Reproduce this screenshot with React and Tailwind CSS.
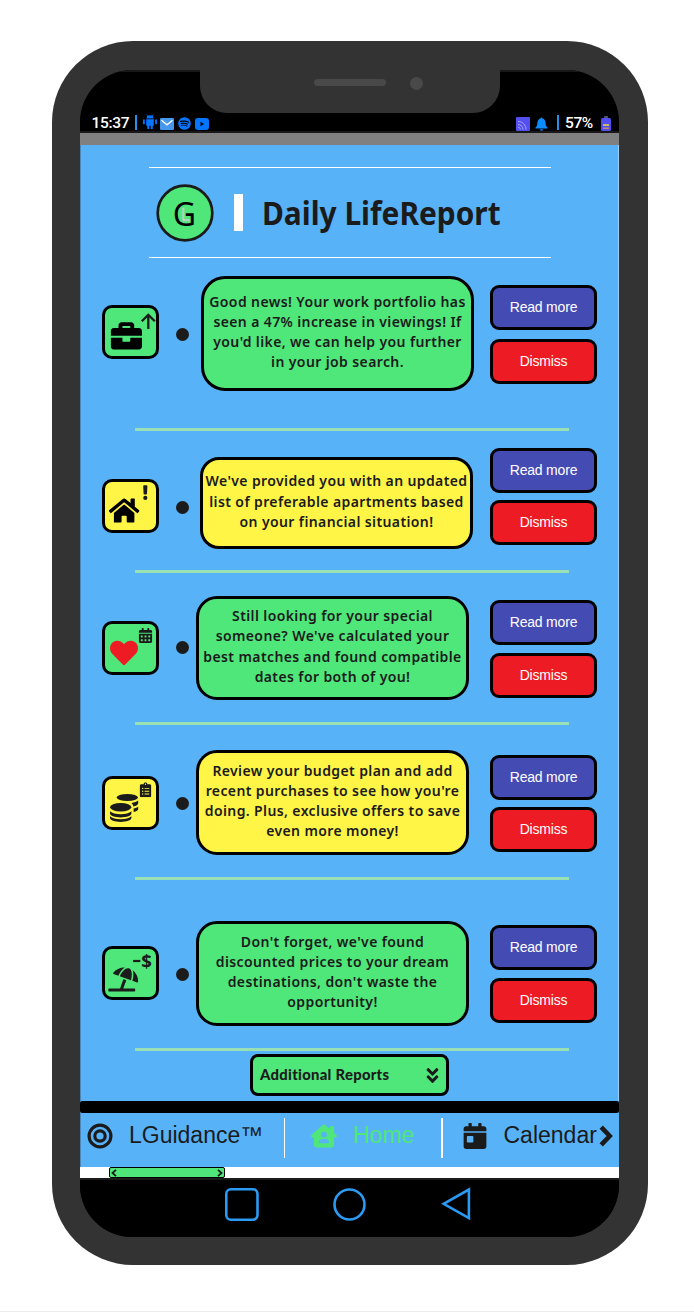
import {
  FaAngleDoubleDown,
  FaBriefcase,
  FaCalendarAlt,
  FaCalendarDay,
  FaClipboardList,
  FaHeart,
  FaHome,
  FaSpotify,
  FaUmbrellaBeach,
} from "react-icons/fa";
import { FaHouseChimneyUser } from "react-icons/fa6";

const INK = "#1b1b1b";

function WorkIcon() {
  return (
    <>
      <FaBriefcase x="8.7" y="15.2" size="31.3" color="#000" />
      <path d="M46.3 24V10.2M39.8 16.2l6.5-6.4 6.5 6.4" fill="none" stroke={INK} strokeWidth="2.3" />
    </>
  );
}

function HousingIcon() {
  return (
    <>
      <FaHome x="6.8" y="16.2" size="30.7" color="#000" />
      <path d="M41.200 7.300a1 1 0 0 1 1-1h2.200a1 1 0 0 1 1 1l-.4 7.400a.8.8 0 0 1-.8.8h-1.800a.8.8 0 0 1-.8-.8z" fill={INK} />
      <circle cx="43.300" cy="18.900" r="2.100" fill={INK} />
    </>
  );
}

function DatingIcon() {
  return (
    <>
      <FaHeart x="8" y="17.9" size="28" color="#ed1c24" />
      <FaCalendarAlt x="36" y="7" size="15" color={INK} />
    </>
  );
}

function BudgetIcon() {
  return (
    <>
      <g fill={INK}>
        <ellipse cx="25.300" cy="21.500" rx="10.700" ry="3.500" />
        <path d="M29.500 27c3-.4 5.300-1.200 6.700-2.400v2.600c0 1.500-2 2.600-4.800 3.200-.3-1.400-.9-2.500-1.900-3.400z" />
        <path d="M31.600 32.400c2-.4 3.600-1.100 4.600-2v2.600c0 1.300-1.800 2.500-4.600 3.100z" />
        <ellipse cx="18.700" cy="31.300" rx="10.600" ry="4.200" />
        <path d="M8 35.200c2 2 6 3 10.700 3s8.700-1 10.700-3v2.400c0 2.200-4.800 3.900-10.700 3.900S8 39.800 8 37.600z" />
        <path d="M8 40.300c2 2 6 3 10.700 3s8.700-1 10.700-3v1.800c0 2.200-4.800 3.900-10.700 3.900S8 44.300 8 42.100z" />
      </g>
      <FaClipboardList x="36" y="6.300" size="15" color={INK} />
    </>
  );
}

function TravelIcon() {
  return (
    <>
      <FaUmbrellaBeach x="6.200" y="18.500" size="30" color={INK} />
      <path d="M31 15h7.300" stroke={INK} strokeWidth="2.200" />
      <text x="39.200" y="21.800" fontSize="18.500" fontWeight="700" fontFamily="'Noto Sans', sans-serif" fill={INK}>
        $
      </text>
    </>
  );
}

const reports = [
  {
    id: "work",
    Icon: WorkIcon,
    lines: ["Good news! Your work portfolio has", "seen a 47% increase in viewings! If", "you'd like, we can help you further", "in your job search."],
    row: "h-[170px]",
    tile: "mt-[47px] bg-[#4fe77a]",
    dot: "mt-[70px]",
    card: "ml-[12px] mt-[18px] h-[115px] rounded-[24px] bg-[#4fe77a] pt-[13px] leading-[20px]",
    actions: "ml-[16px] mt-[27px] gap-[9px]",
  },
  {
    id: "housing",
    Icon: HousingIcon,
    lines: ["We've provided you with an updated", "list of preferable apartments based", "on your financial situation!"],
    row: "h-[139px]",
    tile: "mt-[48px] bg-[#fff547]",
    dot: "mt-[70px]",
    card: "ml-[11px] mt-[26px] h-[92px] rounded-[19px] bg-[#fff547] pt-[11.200px] leading-[20.5px]",
    actions: "ml-[17px] mt-[17px] gap-[7px]",
  },
  {
    id: "dating",
    Icon: DatingIcon,
    lines: ["Still looking for your special", "someone? We've calculated your", "best matches and found compatible", "dates for both of you!"],
    row: "h-[149px]",
    tile: "mt-[48px] bg-[#4fe77a]",
    dot: "mt-[68px]",
    card: "ml-[7px] mt-[23px] h-[104px] rounded-[21px] bg-[#4fe77a] pt-[7.200px] leading-[20.3px]",
    actions: "ml-[21px] mt-[27px] gap-[8px]",
  },
  {
    id: "budget",
    Icon: BudgetIcon,
    lines: ["Review your budget plan and add", "recent purchases to see how you're", "doing. Plus, exclusive offers to save", "even more money!"],
    row: "h-[152px]",
    tile: "mt-[51px] bg-[#fff547]",
    dot: "mt-[72px]",
    card: "ml-[7px] mt-[25px] h-[105px] rounded-[21px] bg-[#fff547] pt-[8px] leading-[20px]",
    actions: "ml-[21px] mt-[30px] gap-[7px]",
  },
  {
    id: "travel",
    Icon: TravelIcon,
    lines: ["Don't forget, we've found", "discounted prices to your dream", "destinations, don't waste the", "opportunity!"],
    row: "h-[168px]",
    tile: "mt-[66px] bg-[#4fe77a]",
    dot: "mt-[88px]",
    card: "ml-[7px] mt-[41px] h-[105px] rounded-[21px] bg-[#4fe77a] pt-[8px] leading-[20px]",
    actions: "ml-[21px] mt-[45px] gap-[8px]",
  },
];

function ActionButton({ color, children }) {
  return (
    <button
      className={`h-[45px] w-[107px] rounded-[9px] border-[3px] border-black text-center font-['Liberation_Sans',sans-serif] text-[14px] tracking-[-0.2px] text-white ${color}`}
    >
      {children}
    </button>
  );
}

function Report({ report }) {
  const { Icon } = report;
  return (
    <>
      <section className={`flex items-start pl-[21px] ${report.row}`}>
        <div className={`h-[54px] w-[57px] shrink-0 rounded-[10px] border-[3px] border-black ${report.tile}`}>
          <svg viewBox="0 0 57 54" className="-m-[3px] h-[54px] w-[57px]">
            <Icon />
          </svg>
        </div>
        <span className={`ml-[17px] size-[13px] shrink-0 rounded-full bg-[#1b1b1b] ${report.dot}`} />
        <p
          className={`w-[273px] shrink-0 border-[3px] border-black text-center font-['Noto_Sans',sans-serif] text-[14px] font-semibold tracking-[0.39px] whitespace-nowrap text-[#1b1b1b] ${report.card}`}
        >
          {report.lines.map((line) => (
            <span key={line} className="-mx-2 block">
              {line}
            </span>
          ))}
        </p>
        <div className={`flex flex-col ${report.actions}`}>
          <ActionButton color="bg-[#444bb3]">Read more</ActionButton>
          <ActionButton color="bg-[#ed1c24]">Dismiss</ActionButton>
        </div>
      </section>
      <hr className="ml-[54px] h-[3px] w-[434px] border-0 bg-[#99e0b5]" />
    </>
  );
}

function StatusBar() {
  return (
    <div className="flex h-[20px] items-center border-b-2 border-[#181818] pl-[11px] font-['Roboto',sans-serif] text-[15.5px] leading-none font-medium text-white">
      <span className="w-[44px] pt-[4px] pl-[0.500px] tracking-[-0.3px]">15:37</span>
      <span className="h-[15px] w-[2px] bg-[#2390ea]" />
      <svg viewBox="0 0 14 16" className="ml-[6px] h-[16px] w-[14px]" fill="#0574ff">
        <path d="M3.500 4.500a3.500 3.300 0 0 1 7 0zM3.200 5.200h7.600v6.600h-1V15H7.700v-3.200H6.300V15H4.200v-3.200h-1z" />
        <rect y="5.300" width="1.800" height="5" rx=".9" />
        <rect x="12.200" y="5.300" width="1.800" height="5" rx=".9" />
        <path d="M3.600.5l1.200 1.500M10.400.5L9.200 2" stroke="#0574ff" strokeWidth=".8" />
      </svg>
      <svg viewBox="0 0 14 12" className="mt-[3px] ml-[3px] h-[12px] w-[14px]">
        <rect width="14" height="12" rx="1.200" fill="#4698ee" />
        <path d="M1.500 2.200L7 6.800l5.500-4.600" fill="none" stroke="#fff" strokeWidth="1.300" />
      </svg>
      <FaSpotify className="mt-[3px] ml-[4px]" size={13} color="#0574ff" />
      <svg viewBox="0 0 14 12" className="mt-[4px] ml-[4px] h-[12px] w-[14px]">
        <rect width="14" height="12" rx="3" fill="#0574ff" />
        <path d="M5.500 3.800v4.400L9 6z" fill="#000" />
      </svg>
      <svg viewBox="0 0 14 14" className="mt-[3px] ml-[307px] h-[14px] w-[14px]">
        <rect width="14" height="14" rx="1" fill="#5450f0" />
        <g fill="none" stroke="#aaa5ff" strokeWidth="1">
          <path d="M2 4.500c4.500 0 8 3.500 8 8M2 7.500c2.800 0 5 2.200 5 5M2 10.200c1.300 0 2.300 1 2.300 2.300" />
        </g>
      </svg>
      <svg viewBox="0 0 13 14" className="mt-[3px] ml-[5px] h-[14px] w-[13px]" fill="#0c8cff">
        <path d="M5.500 1.600a1 1 0 0 1 2 0C9.600 2.100 10.600 4 10.600 6c0 2.500.8 3.700 1.900 4.500v1H.5v-1C1.600 9.700 2.400 8.500 2.400 6c0-2 1-3.900 3.100-4.400zM5 12.200h3a1.500 1.500 0 0 1-3 0z" />
      </svg>
      <span className="ml-[9px] h-[15px] w-[2px] bg-[#2390ea]" />
      <span className="ml-[6px] w-[36px] pt-[4px] tracking-[-0.4px]">57%</span>
      <svg viewBox="0 0 10 15" className="mt-[2px] h-[15px] w-[10px]">
        <rect x="3" width="4" height="3" rx="1" fill="#55556a" />
        <rect y="2" width="10" height="13" rx="1.500" fill="#514ff0" />
        <path d="M2 9h6" stroke="#f5dd3c" strokeWidth="1.300" />
        <path d="M2 12.300h6" stroke="#c98a68" strokeWidth="1.500" />
      </svg>
    </div>
  );
}

function TopBezel() {
  return (
    <div className="h-[63px] border-t-2 border-[#181818]">
      <div className="mx-auto -mt-[2px] flex h-[43px] w-[300px] items-start rounded-b-[27px] bg-[#333] pt-[7px] pl-[114px]">
        <span className="mt-[2px] h-[7px] w-[72px] rounded-full bg-[#494949]" />
        <span className="ml-[24px] size-[13px] rounded-full bg-[#494949]" />
      </div>
      <StatusBar />
    </div>
  );
}

function ReportHeader() {
  return (
    <header className="ml-[68px] mt-[22px] flex h-[91px] w-[402px] items-center border-y-[1.500px] border-white">
      <svg viewBox="0 0 58 58" className="ml-[7px] size-[58px]">
        <circle cx="29" cy="29" r="27.300" fill="#4fe77a" stroke={INK} strokeWidth="2.700" />
        <text x="28.300" y="41.500" textAnchor="middle" fontSize="32" fontFamily="'Noto Sans', sans-serif" fill="#000">
          G
        </text>
        <text x="24.500" y="37" fontSize="18" fontFamily="'Noto Sans', sans-serif" fill="#b4d3bd" stroke="#b4d3bd" strokeWidth=".4">
          L
        </text>
      </svg>
      <span className="ml-[20px] h-[37px] w-[9px] bg-white" />
      <h1 className="ml-[19px] origin-left scale-x-[0.905] font-['Noto_Sans',sans-serif] text-[33px] leading-none font-bold whitespace-nowrap text-[#1b1b1b]">
        Daily LifeReport
      </h1>
    </header>
  );
}

function TabBar() {
  return (
    <nav className="flex h-[54px] items-center border-l border-[#4b86b8] bg-[#58b2f8] pb-[9px] font-['Liberation_Sans',sans-serif] text-[23px] whitespace-nowrap text-[#1b1b1b]">
      <svg viewBox="0 0 26 26" className="ml-[6px] size-[26px] shrink-0" fill="none" stroke={INK} strokeWidth="3.200">
        <circle cx="13" cy="13" r="10.900" />
        <circle cx="13" cy="13" r="5.200" />
      </svg>
      <span className="ml-[16px] w-[154.500px] shrink-0">LGuidance™</span>
      <span className="mt-[4px] h-[40px] w-[1.500px] shrink-0 bg-white" />
      <FaHouseChimneyUser className="ml-[26px] shrink-0" size={26} color="#4fe77a" />
      <span className="ml-[16px] w-[88px] shrink-0 text-[#4fe77a]">Home</span>
      <span className="mt-[4px] h-[40px] w-[1.500px] shrink-0 bg-white" />
      <FaCalendarDay className="ml-[19px] shrink-0" size={26} />
      <span className="ml-[16px] w-[94px] shrink-0">Calendar</span>
      <svg viewBox="0 0 14 22" className="mt-[1px] ml-[1px] h-[22px] w-[14px] shrink-0" fill="none" stroke={INK} strokeWidth="4.600">
        <path d="M2.200 2.200L10.700 11l-8.500 8.800" />
      </svg>
    </nav>
  );
}

function ScrollStrip() {
  return (
    <div className="h-[11px] bg-white pl-[29px]">
      <div className="flex h-[11px] w-[116px] items-center justify-between rounded-[2px] border-[1.500px] border-black bg-[#4fe77a] px-[1px]">
        <svg viewBox="0 0 6 8" className="h-[8px] w-[6px]" fill="none" stroke={INK} strokeWidth="1.800">
          <path d="M5 .8L1.500 4 5 7.200" />
        </svg>
        <svg viewBox="0 0 6 8" className="h-[8px] w-[6px]" fill="none" stroke={INK} strokeWidth="1.800">
          <path d="M1 .8L4.500 4 1 7.200" />
        </svg>
      </div>
    </div>
  );
}

function SystemButtons() {
  return (
    <div className="flex h-[59px] items-start border-t-2 border-[#1b1b1b] bg-black pt-[6px] pl-[144px]">
      <svg viewBox="0 0 248 38" className="h-[38px] w-[248px]" fill="none" stroke="#2b9af3" strokeWidth="2.600">
        <rect x="2.300" y="3.300" width="31.200" height="30.400" rx="4.500" />
        <circle cx="125.500" cy="18.500" r="15" />
        <path d="M219.600 17.800L244.900 3.500v28.600z" />
      </svg>
    </div>
  );
}

export default function App() {
  return (
    <div className="flex h-[1312px] w-[694px] items-start border-b border-[#eeeeee] bg-white pt-[41px] pl-[52px]">
      <div className="h-[1224px] w-[596px] rounded-[81px] bg-[#333] pt-[29px] pl-[28px]">
        <div className="h-[1167px] w-[539px] overflow-hidden rounded-[52px] bg-black">
          <TopBezel />
          <div className="h-[12px] bg-[#808080]" />
          <main className="flex h-[956px] flex-col border-r border-l border-r-[#9dd0f8] border-l-[#4b86b8] bg-[#58b2f8]">
            <ReportHeader />
            {reports.map((report) => (
              <Report key={report.id} report={report} />
            ))}
            <button className="mt-[3px] ml-[169px] flex h-[42px] w-[199px] shrink-0 items-center justify-between rounded-[8px] border-[3px] border-black bg-[#4fe77a] pr-[4px] pb-[2px] pl-[7px] font-['Lato',sans-serif] text-[14.800px] font-black tracking-[0.300px] whitespace-nowrap text-[#1b1b1b]">
              Additional Reports
              <FaAngleDoubleDown size={19} className="mt-[2px]" />
            </button>
          </main>
          <div className="bg-[#58b2f8]">
            <div className="h-[12px] rounded-[2px] bg-black" />
          </div>
          <TabBar />
          <ScrollStrip />
          <SystemButtons />
        </div>
      </div>
    </div>
  );
}
